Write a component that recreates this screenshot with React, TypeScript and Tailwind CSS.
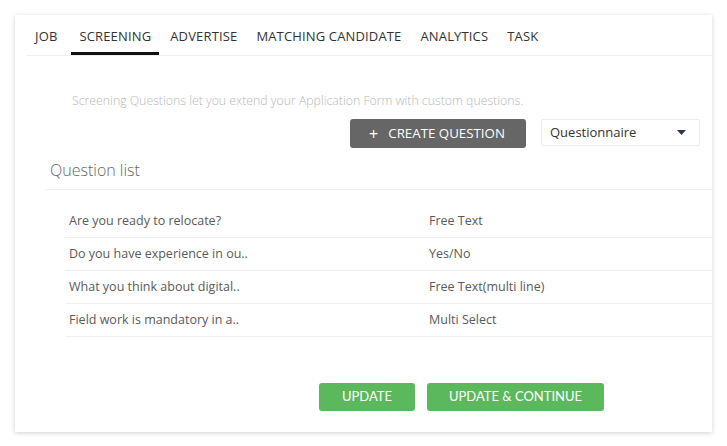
import React from 'react';

const tabs = ['JOB', 'SCREENING', 'ADVERTISE', 'MATCHING CANDIDATE', 'ANALYTICS', 'TASK'];

const questions = [
  { q: 'Are you ready to relocate?', type: 'Free Text' },
  { q: 'Do you have experience in ou..', type: 'Yes/No' },
  { q: 'What you think about digital..', type: 'Free Text(multi line)' },
  { q: 'Field work is mandatory in a..', type: 'Multi Select' },
];

const App: React.FC = () => {
  return (
    <div className="w-[727px] h-[446px] bg-white pt-[15px] pl-[15px]" style={{ fontFamily: '"Open Sans", sans-serif' }}>
      <div className="w-[697px] h-[417px] bg-white shadow-[0_1px_5px_rgba(0,0,0,0.18)] flex flex-col">
        {/* tabs */}
        <div className="ml-[12px] h-[41px] flex items-end gap-[3px] border-b border-[#eeeeee]">
          {tabs.map((t, i) => (
            <div
              key={t}
              className={
                'px-[8px] pb-[8px] border-b-[3px] text-[13px] leading-[16px] text-[#333] tracking-[0.15px] ' +
                (i === 1 ? 'border-[#111]' : 'border-transparent') +
                (i === 0 ? ' pr-[11px]' : '')
              }
            >
              {t}
            </div>
          ))}
        </div>

        <div className="ml-[57px] mt-[37px] text-[12.3px] leading-[16px] text-[#b8b8b8] font-light">
          Screening Questions let you extend your Application Form with custom questions.
        </div>

        <div className="mt-[10px] flex justify-end items-start gap-[15px] mr-[12px]">
          <button className="w-[176px] h-[29px] bg-[#666666] rounded-[3px] text-white text-[13.3px] flex items-center justify-center gap-[10px] pr-[2px]">
            <span className="text-[16px] leading-none">+</span>
            <span>CREATE QUESTION</span>
          </button>
          <div className="w-[159px] h-[27px] border border-[#ececec] rounded-[2px] flex items-center justify-between pl-[8px] pr-[13px] text-[13px] text-[#333]">
            <span>Questionnaire</span>
            <svg width="9" height="5" viewBox="0 0 9 5">
              <path d="M0 0H9L4.5 5Z" fill="#2c3352" />
            </svg>
          </div>
        </div>

        <div className="ml-[30px] mt-[12px] pl-[5px] pb-[9px] border-b border-[#eeeeee] text-[16px] leading-[20px] text-[#666] font-light">
          Question list
        </div>

        <div className="ml-[50px] mt-[15px] flex flex-col">
          {questions.map((r) => (
            <div key={r.q} className="h-[33px] flex items-center border-b border-[#eeeeee] text-[12.5px] text-[#5a5a5a]">
              <div className="w-[364px] pl-[4px]">{r.q}</div>
              <div>{r.type}</div>
            </div>
          ))}
        </div>

        <div className="mt-[46px] ml-[304px] flex gap-[12px]" style={{ fontFamily: 'Lato, sans-serif' }}>
          <button className="w-[96px] h-[28px] bg-[#5cb85c] rounded-[3px] text-white text-[13px]">UPDATE</button>
          <button className="w-[177px] h-[28px] bg-[#5cb85c] rounded-[3px] text-white text-[13px]">UPDATE &amp; CONTINUE</button>
        </div>
      </div>
    </div>
  );
};

export default App;
